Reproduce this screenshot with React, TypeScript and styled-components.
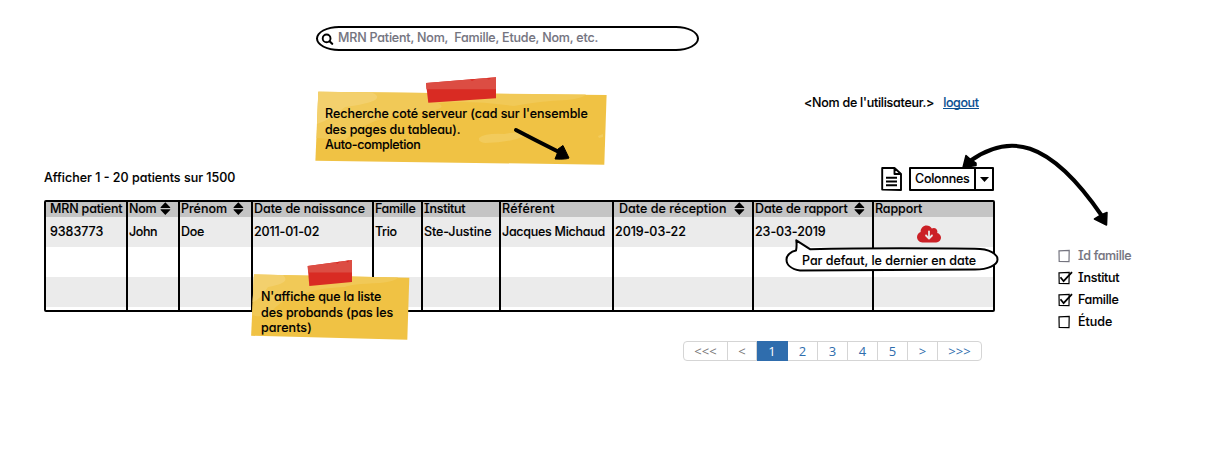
import React from "react";
import styled, { createGlobalStyle } from "styled-components";
import { FaCloudArrowDown } from "react-icons/fa6";

const GlobalStyle = createGlobalStyle`
  body { margin: 0; background: #fff; }
  * { box-sizing: border-box; }
`;

const Page = styled.div`
  position: relative;
  width: 1214px;
  height: 472px;
  padding-top: 26px;
  overflow: hidden;
  color: #000;
  font: 500 12.5px/16px Inter, "Open Sans", sans-serif;
  font-feature-settings: "cv11", "cv08";
`;

const Text = styled.span<{ $track?: number }>`
  white-space: pre;
  letter-spacing: ${(p) => p.$track ?? 0}px;
  -webkit-text-stroke: 0.1px currentColor;
`;

const SearchBox = styled.div`
  display: flex;
  align-items: center;
  width: 383px;
  height: 25px;
  margin-left: 316px;
  padding: 0 0 1px 3px;
  gap: 4px;
  border: 2px solid #000;
  border-radius: 23px / 12.5px;
  color: #74747f;
  svg { margin-top: 2px; }
`;

const UserLine = styled.div`
  display: flex;
  gap: 9px;
  margin: 44px 0 0 804px;
  height: 16px;
`;

const Logout = styled.a`
  color: #0a5093;
  border-bottom: 1px solid #0a5093;
  height: 14px;
`;

const Content = styled.div`
  display: flex;
  align-items: flex-start;
  margin-top: 55px;
  padding-left: 44px;
`;

const Main = styled.main`
  width: 951px;
`;

const Toolbar = styled.div`
  display: flex;
  align-items: center;
  height: 26px;
  padding-right: 1px;
`;

const Summary = styled.div`
  padding-bottom: 2px;
`;

const Tools = styled.div`
  display: flex;
  align-items: center;
  gap: 7px;
  margin-left: auto;
`;

const Select = styled.button`
  display: flex;
  align-items: center;
  width: 85px;
  height: 24px;
  padding: 0 0 0 4px;
  border: 2px solid #000;
  border-radius: 1px;
  background: #fff;
  color: inherit;
  font: inherit;
  font-feature-settings: inherit;
`;

const SelectArrow = styled.span`
  display: flex;
  align-items: center;
  justify-content: center;
  width: 18px;
  height: 100%;
  margin-left: auto;
  border-left: 2px solid #000;
`;

const Table = styled.div`
  display: flex;
  height: 112px;
  margin-top: 8px;
  border: 2px solid #000;
  border-radius: 2px;
`;

const Column = styled.div<{ $width: number }>`
  width: ${(p) => p.$width}px;
  height: 109px;
  flex: none;
  &:not(:last-child) { border-right: 2px solid #000; }
`;

const Head = styled.div<{ $pad: number }>`
  display: flex;
  align-items: center;
  height: 15px;
  padding: 0 0 2px ${(p) => p.$pad}px;
  background: #c4c4c4;
`;

const Cell = styled.div<{ $shade?: boolean; $pad?: number }>`
  display: flex;
  align-items: center;
  height: 30px;
  padding-left: ${(p) => p.$pad ?? 0}px;
  background: ${(p) => (p.$shade ? "#ebebeb" : "#fff")};
  svg { margin-top: 4px; }
`;

const SortMark = styled.svg<{ $gap: number }>`
  flex: none;
  margin-left: auto;
  margin-right: ${(p) => p.$gap}px;
`;

const Pager = styled.nav`
  display: flex;
  width: 299px;
  height: 20px;
  margin: 29px 0 0 639px;
  border: 1px solid #d5d5d5;
  border-radius: 4px;
  font: 400 13px/18px "Open Sans", "Noto Sans", sans-serif;
`;

const PageLink = styled.a<{ $width: number; $kind?: "on" | "muted" }>`
  width: ${(p) => p.$width}px;
  flex: none;
  height: ${(p) => (p.$kind === "on" ? 20 : 18)}px;
  margin-top: ${(p) => (p.$kind === "on" ? -1 : 0)}px;
  line-height: ${(p) => (p.$kind === "on" ? 20 : 18)}px;
  text-align: center;
  border-right: 1px solid ${(p) => (p.$kind === "on" ? "#2f6dad" : "#d5d5d5")};
  background: ${(p) => (p.$kind === "on" ? "#2f6dad" : "transparent")};
  color: ${(p) => (p.$kind === "on" ? "#fff" : p.$kind === "muted" ? "#777" : "#2f6dad")};
  &:last-child { border-right: 0; }
`;

const Checklist = styled.aside`
  display: flex;
  flex-direction: column;
  gap: 6px;
  margin: 82px 0 0 63px;
`;

const CheckRow = styled.label<{ $off?: boolean }>`
  display: flex;
  align-items: center;
  gap: 5px;
  height: 16px;
  color: ${(p) => (p.$off ? "#74747f" : "#000")};
`;

const Note = styled.div<{ $x: number; $y: number; $w: number; $h: number }>`
  position: absolute;
  left: ${(p) => p.$x}px;
  top: ${(p) => p.$y}px;
  width: ${(p) => p.$w}px;
  height: ${(p) => p.$h}px;
`;

const Art = styled.svg`
  position: absolute;
  left: 0;
  top: 0;
`;

const NoteText = styled.div<{ $top: number }>`
  position: relative;
  display: flex;
  flex-direction: column;
  padding: ${(p) => p.$top}px 0 0 10px;
  line-height: 15px;
  span:first-child { margin-bottom: 1px; }
`;

const Bubble = styled.div`
  position: absolute;
  left: 784px;
  top: 238px;
  width: 216px;
  height: 36px;
`;

const BubbleText = styled.div`
  position: relative;
  padding: 15px 0 0 18px;
`;

const Connector = styled.svg`
  position: absolute;
  left: 950px;
  top: 130px;
`;

type Col = {
  w: number; head: string; ht: number; pad: number; sort?: number;
  cell?: string; ct?: number; cpad?: number;
};

const columns: Col[] = [
  { w: 82, head: "MRN patient", ht: -0.17, pad: 4, cell: "9383773", ct: -0.05, cpad: 4 },
  { w: 52, head: "Nom", ht: -0.3, pad: 1, sort: 7, cell: "John", ct: -0.4, cpad: 1 },
  { w: 73, head: "Prénom", ht: 0, pad: 1, sort: 7, cell: "Doe", ct: -0.3, cpad: 1 },
  { w: 121, head: "Date de naissance", ht: -0.03, pad: 1, cell: "2011-01-02", ct: -0.15, cpad: 1 },
  { w: 49, head: "Famille", ht: -0.3, pad: 1, cell: "Trio", ct: -0.4, cpad: 1 },
  { w: 78, head: "Institut", ht: -0.25, pad: 1, cell: "Ste-Justine", ct: -0.1, cpad: 1 },
  { w: 113, head: "Référent", ht: 0.25, pad: 1, cell: "Jacques Michaud", ct: -0.28, cpad: 1 },
  { w: 140, head: "Date de réception", ht: 0.05, pad: 5, sort: 7, cell: "2019-03-22", ct: -0.05, cpad: 1 },
  { w: 120, head: "Date de rapport", ht: -0.13, pad: 1, sort: 7, cell: "23-03-2019", ct: -0.08, cpad: 1 },
  { w: 119, head: "Rapport", ht: -0.1, pad: 1 },
];

const pages: { t: string; w: number; k?: "on" | "muted" }[] = [
  { t: "<<<", w: 44, k: "muted" }, { t: "<", w: 29, k: "muted" }, { t: "1", w: 31, k: "on" },
  { t: "2", w: 30 }, { t: "3", w: 30 }, { t: "4", w: 30 }, { t: "5", w: 30 },
  { t: ">", w: 30 }, { t: ">>>", w: 43 },
];

const options = [
  { label: "Id famille", off: true, on: false, t: -0.35 },
  { label: "Institut", off: false, on: true, t: -0.25 },
  { label: "Famille", off: false, on: true, t: -0.3 },
  { label: "Étude", off: false, on: false, t: 0 },
];

const Sorter = ({ gap }: { gap: number }) => (
  <SortMark $gap={gap} width="11" height="13" viewBox="0 0 11 13">
    <path d="M5.3 0.3 10.2 5.2V5.9H.6V5.2ZM5.3 12.9 .6 8V7.3h9.6V8Z" />
  </SortMark>
);

const CheckIcon = ({ on, off }: { on: boolean; off: boolean }) => (
  <svg width="15" height="14" viewBox="0 0 15 14" fill="none" stroke={off ? "#74747f" : "#000"}>
    <path d="M1 1.8 11.2 1.3 11 12.7 1.2 12.4Z" strokeWidth="1.2" />
    {on && <path d="M2.5 6.3 5.6 10.2 14 1.2" strokeWidth="1.8" />}
  </svg>
);

export default function App() {
  return (
    <Page>
      <GlobalStyle />
      <SearchBox>
        <svg width="13" height="13" viewBox="0 0 13 13" fill="none" stroke="#000" strokeWidth="1.9" strokeLinecap="round">
          <circle cx="5.6" cy="5.4" r="3.9" />
          <path d="M8.5 8.3 11.2 10.8" strokeWidth="2.2" />
        </svg>
        <Text $track={-0.19}>MRN Patient, Nom,  Famille, Etude, Nom, etc.</Text>
      </SearchBox>
      <UserLine>
        <Text $track={-0.26}>{"<Nom de l'utilisateur.>"}</Text>
        <Logout><Text $track={-0.4}>logout</Text></Logout>
      </UserLine>
      <Content>
        <Main>
          <Toolbar>
            <Summary><Text>Afficher 1 - 20 patients sur 1500</Text></Summary>
            <Tools>
              <svg width="21" height="24" viewBox="0 0 21 24" fill="none" stroke="#000" strokeWidth="1.9">
                <path d="M1.2 1H13.5L20 7V23L1.2 22.6ZM13.5 1V7H20M5 10.8H16M5 14.5H16M5 18.2H16" strokeLinejoin="round" />
              </svg>
              <Select>
                <Text $track={-0.25}>Colonnes</Text>
                <SelectArrow>
                  <svg width="9" height="5" viewBox="0 0 9 5"><path d="M0 0H9L4.5 5Z" /></svg>
                </SelectArrow>
              </Select>
            </Tools>
          </Toolbar>
          <Table>
            {columns.map((c) => (
              <Column key={c.head} $width={c.w}>
                <Head $pad={c.pad}>
                  <Text $track={c.ht}>{c.head}</Text>
                  {c.sort !== undefined && <Sorter gap={c.sort} />}
                </Head>
                <Cell $shade $pad={c.cell ? c.cpad : 43}>
                  {c.cell ? <Text $track={c.ct}>{c.cell}</Text> : <FaCloudArrowDown size={24} color="#cb2026" />}
                </Cell>
                <Cell />
                <Cell $shade />
              </Column>
            ))}
          </Table>
          <Pager>
            {pages.map((p) => (
              <PageLink key={p.t} $width={p.w} $kind={p.k}>{p.t}</PageLink>
            ))}
          </Pager>
        </Main>
        <Checklist>
          {options.map((o) => (
            <CheckRow key={o.label} $off={o.off}>
              <CheckIcon on={o.on} off={o.off} />
              <Text $track={o.t}>{o.label}</Text>
            </CheckRow>
          ))}
        </Checklist>
      </Content>

      <Note $x={315} $y={77} $w={292} $h={89}>
        <Art width="292" height="89" viewBox="315 77 292 89">
          <path d="M318.3 91.8 606.6 95 604.3 164.7 315.4 160.7Z" fill="#f0c244" />
          <path d="M318.3 91.8 586 94.5Q583 98 567 100 540 101 514 106 470 100 438 103 450 109 422 112 370 115 345 140 330 139 316.7 138Z" fill="#f1c957" />
          <path d="M318.3 91.8 372 92.5Q390 101 345 107 330 120 317 124Z" fill="#f5d67b" opacity=".6" />
          <path d="M479 138Q485 133 504 134 533 129 527 135 510 143 485 143 478 142 479 138ZM598 136 603 134V137L599 138Z" fill="#f2cb5c" />
          <path d="M426 83 496 77.3V98.3L428.3 102.8Z" fill="#d92b23" />
          <path d="M426 83 496 77.3V89.3H426.4Z" fill="#dc4d43" />
          <path d="M470 79.5 476 79 472 81ZM486 78.4 491 78 489 79.6Z" fill="#d92b23" />
          <path d="M516 130 Q535 140 557 151" fill="none" stroke="#000" strokeWidth="4" strokeLinecap="round" />
          <path d="M563 145.5 569 158Q567 159.5 555 159L557 154 558 149Z" stroke="#000" strokeLinejoin="round" />
        </Art>
        <NoteText $top={29}>
          <Text $track={-0.03}>Recherche coté serveur (cad sur l'ensemble</Text>
          <Text $track={-0.12}>des pages du tableau).</Text>
          <Text $track={-0.33}>Auto-completion</Text>
        </NoteText>
      </Note>

      <Note $x={251} $y={260} $w={159} $h={80}>
        <Art width="159" height="80" viewBox="251 260 159 80">
          <path d="M254 274.4 409.3 277.7 407.3 339.7 251.1 335.8Z" fill="#f0c244" />
          <path d="M254 274.4 398 277.5Q396 281 380 283 350 284 345 287 320 288 310 292 280 298 270 314 260 318 252 315Z" fill="#f1c957" />
          <path d="M254 274.4 283 275Q292 283 268 287 260 300 252.5 302Z" fill="#f5d67b" opacity=".6" />
          <path d="M307.7 266 352 260V282L309.3 286Z" fill="#d92b23" />
          <path d="M307.7 266 352 260V272.4H308.1Z" fill="#dc4d43" />
          <path d="M336 262.3 340 261.8 337 264ZM346 261 349 260.6 348 262.4Z" fill="#d92b23" />
        </Art>
        <NoteText $top={29}>
          <Text $track={-0.13}>N'affiche que la liste</Text>
          <Text $track={-0.05}>des probands (pas les</Text>
          <Text $track={0.05}>parents)</Text>
        </NoteText>
      </Note>

      <Bubble>
        <Art width="216" height="36" viewBox="784 238 216 36">
          <path
            d="M796.3 240.3 810 249.2Q880 247.5 975 248.7C990 248.7 997.5 254 997.5 259.5S988 269.5 975 269.5Q900 269.8 800 270.5C790 269 786.5 264 786.5 259.5S791 251.5 796 250.5Q797 246 796.3 240.3Z"
            fill="#fff" stroke="#000" strokeWidth="2" strokeLinejoin="round"
          />
        </Art>
        <BubbleText><Text $track={-0.03}>Par defaut, le dernier en date</Text></BubbleText>
      </Bubble>

      <Connector width="170" height="100" viewBox="950 130 170 100">
        <path d="M970 161C1008 134 1048 137 1102 216" fill="none" stroke="#000" strokeWidth="4" />
        <path d="M966 155.5 963 167.5 976 165.5 976 163 970 159ZM1094.5 219 1106.5 225 1107 212.5 1101 215Z" stroke="#000" strokeWidth="1.5" strokeLinejoin="round" />
      </Connector>
    </Page>
  );
}
